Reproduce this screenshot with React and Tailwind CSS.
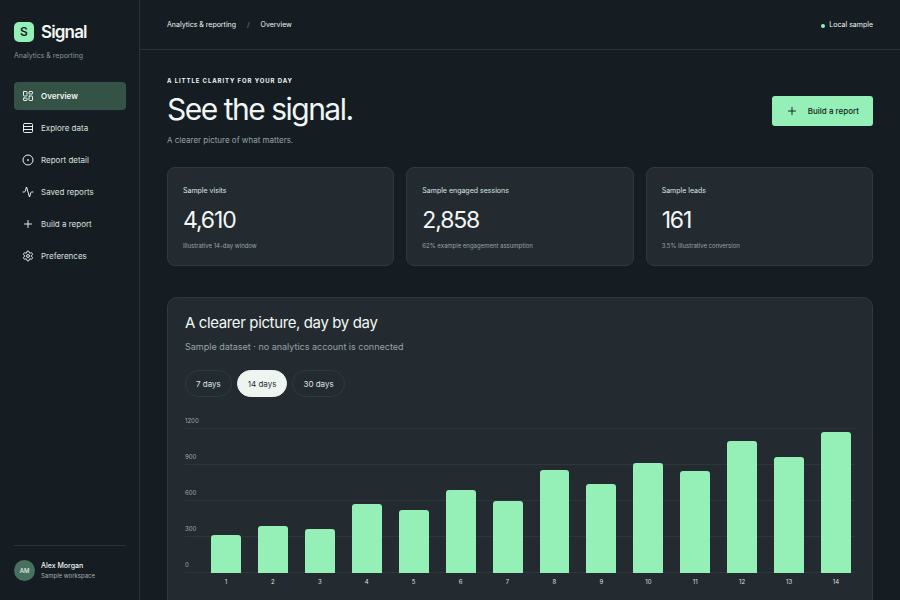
import React, { useState } from 'react';
import { LayoutDashboard, Rows3, Activity, Plus, Settings } from 'lucide-react';
import clsx from 'clsx';

const DotIcon = ({ className }) => (
  <svg className={className} viewBox="0 0 24 24" fill="none" stroke="currentColor" strokeWidth="2">
    <circle cx="12" cy="12" r="10" />
    <circle cx="12" cy="12" r="1" fill="currentColor" />
  </svg>
);

const navItems = [
  { label: 'Overview', icon: LayoutDashboard },
  { label: 'Explore data', icon: Rows3 },
  { label: 'Report detail', icon: DotIcon },
  { label: 'Saved reports', icon: Activity },
  { label: 'Build a report', icon: Plus },
  { label: 'Preferences', icon: Settings },
];

const stats = [
  { label: 'Sample visits', value: '4,610', note: 'Illustrative 14-day window' },
  { label: 'Sample engaged sessions', value: '2,858', note: '62% example engagement assumption' },
  { label: 'Sample leads', value: '161', note: '3.5% illustrative conversion' },
];

const ranges = ['7 days', '14 days', '30 days'];
const ticks = [1200, 900, 600, 300, 0];
const visits = [316, 392, 367, 575, 524, 691, 600, 860, 742, 915, 848, 1096, 966, 1174];

const Sidebar = () => (
  <aside className="sticky top-0 flex h-screen w-35 shrink-0 flex-col border-r border-[#25363a] pt-5.5 pr-[13px] pb-[19px] pl-3.5">
    <a href="#overview" className="flex items-center gap-[7px]">
      <span className="flex size-5 items-center justify-center rounded-[5px] bg-[#95f0b7] text-xs font-semibold text-[#14231d]">
        S
      </span>
      <span className="text-[17px] leading-5 font-semibold tracking-tighter text-[#f1f8f5]">Signal</span>
    </a>
    <p className="mt-2 text-[7px] leading-3 text-[#89949a]">Analytics &amp; reporting</p>

    <nav className="mt-5 flex flex-col gap-1">
      {navItems.map(({ label, icon: Icon }, i) => (
        <a
          key={label}
          href="#overview"
          className={clsx(
            'flex h-7 items-center gap-[7px] rounded px-2 text-[8px]',
            i === 0 ? 'bg-[#345346] font-semibold text-[#eef7f3]' : 'text-[#d7e0de]'
          )}
        >
          <Icon className="size-3 text-[#e6efec]" />
          {label}
        </a>
      ))}
    </nav>

    <div className="mt-auto flex items-center gap-1.5 border-t border-[#25363a] pt-3.5">
      <span className="flex size-[21px] items-center justify-center rounded-full bg-[#47705f] text-[6px] font-medium text-[#e3f1ea]">
        AM
      </span>
      <div>
        <p className="text-[7px] leading-2.5 font-medium text-[#eef5f3]">Alex Morgan</p>
        <p className="text-[6px] leading-2.5 text-[#a4afb2]">Sample workspace</p>
      </div>
    </div>
  </aside>
);

const StatCard = ({ label, value, note }) => (
  <div className="rounded-lg border border-[#2b3b40] bg-[#232b30] px-[15px] pt-[17px] pb-[13px]">
    <p className="text-[7px] leading-3 text-[#dce5e3]">{label}</p>
    <p className="mt-[7px] text-[23px] leading-8 tracking-tighter text-[#f3f8f6]">{value}</p>
    <p className="mt-1 text-[6px] leading-3 text-[#98a3a7]">{note}</p>
  </div>
);

const BarChart = () => (
  <div className="mt-4">
    <div className="grid">
      {/* Axis labels sit on top of their grid lines */}
      <div className="col-start-1 row-start-1">
        {ticks.map((tick, i) => (
          <div
            key={tick}
            className={clsx(
              'flex items-end border-b border-[#2b373b] pb-0.5 text-[6px] leading-2.5 text-[#a0aaae]',
              i === 0 ? 'h-4' : 'h-9'
            )}
          >
            {tick}
          </div>
        ))}
      </div>
      <div className="col-start-1 row-start-1 mt-4 mr-1 ml-6.5 grid grid-cols-14 gap-[17px]">
        {visits.map((v, i) => (
          <div key={i} className="flex items-end">
            <div className="w-full rounded-t-[3px] bg-[#95f0b7]" style={{ height: `${(v / 1200) * 100}%` }} />
          </div>
        ))}
      </div>
    </div>
    <div className="mt-1 mr-1 ml-6.5 grid grid-cols-14 gap-[17px] text-center text-[6px] leading-2.5 text-[#d7e0de]">
      {visits.map((v, i) => (
        <span key={i}>{i + 1}</span>
      ))}
    </div>
  </div>
);

const App = () => {
  const [range, setRange] = useState('14 days');

  return (
    <div className="flex min-h-screen bg-[#151d22] font-['Inter',sans-serif] text-[#eef5f3]">
      <Sidebar />
      <div className="min-w-0 flex-1">
        <header className="flex h-[50px] items-center justify-between border-b border-[#25363a] px-[27px] pt-0.5 text-[7px]">
          <div className="flex items-center gap-[11px]">
            <a href="#analytics">Analytics &amp; reporting</a>
            <span className="text-[#7b868b]">/</span>
            <span>Overview</span>
          </div>
          <div className="flex items-center gap-1">
            <span className="size-1 rounded-full bg-[#95f0b7]" />
            Local sample
          </div>
        </header>

        <main className="px-[27px] pt-[26px] pb-6">
          <div className="flex items-center justify-between">
            <div>
              <p className="text-[6px] leading-2.5 font-bold tracking-[0.15em] uppercase">A little clarity for your day</p>
              <h1 className="mt-[5px] text-[30px] leading-9 tracking-tighter text-[#eff7f5]">See the signal.</h1>
              <p className="mt-[7px] text-[8px] leading-3 text-[#98a3a7]">A clearer picture of what matters.</p>
            </div>
            <button
              type="button"
              className="flex h-7.5 items-center gap-2.5 rounded-[3px] bg-[#95f0b7] px-3.5 text-[8px] font-medium text-[#14231d]"
            >
              <Plus className="size-3" />
              Build a report
            </button>
          </div>

          <section className="mt-[21px] grid grid-cols-3 gap-3">
            {stats.map((s) => (
              <StatCard key={s.label} {...s} />
            ))}
          </section>

          <section className="mt-[31px] rounded-[10px] border border-[#2b3b40] bg-[#232b30] px-[17px] pt-[15px] pb-6">
            <h2 className="text-[15px] leading-5 tracking-tight text-[#f1f8f5]">A clearer picture, day by day</h2>
            <p className="mt-2 text-[9px] leading-3 text-[#98a3a7]">
              Sample dataset · no analytics account is connected
            </p>
            <div className="mt-[17px] flex gap-[5px]">
              {ranges.map((r) => (
                <button
                  key={r}
                  type="button"
                  aria-pressed={r === range}
                  onClick={() => setRange(r)}
                  className={clsx(
                    'h-[27px] rounded-full border px-2.5 text-[8px]',
                    r === range ? 'border-[#eef5f1] bg-[#eef5f1] text-[#26302f]' : 'border-[#2b3b40] text-[#dce5e3]'
                  )}
                >
                  {r}
                </button>
              ))}
            </div>
            <BarChart />
          </section>
        </main>
      </div>
    </div>
  );
};

export default App;
